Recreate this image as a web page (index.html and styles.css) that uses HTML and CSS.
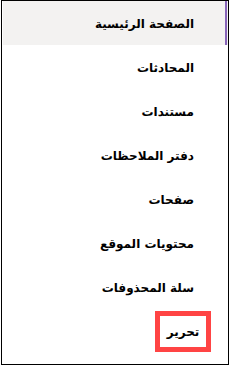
FILE: index.html
```html
<!DOCTYPE html>
<html lang="ar" dir="rtl">

<head>
    <meta charset="UTF-8">
    <meta name="viewport" content="width=device-width, initial-scale=1.0">
    <title>التنقل</title>
    <link rel="stylesheet" href="styles.css">
</head>

<body>
    <nav class="side-nav">
        <ul class="nav-list">
            <li class="nav-item active"><a href="#">الصفحة الرئيسية</a></li>
            <li class="nav-item"><a href="#">المحادثات</a></li>
            <li class="nav-item"><a href="#">مستندات</a></li>
            <li class="nav-item"><a href="#">دفتر الملاحظات</a></li>
            <li class="nav-item"><a href="#">صفحات</a></li>
            <li class="nav-item"><a href="#">محتويات الموقع</a></li>
            <li class="nav-item"><a href="#">سلة المحذوفات</a></li>
            <!-- رابط التحرير مع إطار التمييز -->
            <li class="nav-item edit-item"><a href="#" class="edit-link">تحرير</a></li>
        </ul>
    </nav>
</body>

</html>
```

FILE: styles.css
```css
* {
    margin: 0;
    padding: 0;
    box-sizing: border-box;
}

body {
    font-family: 'DejaVu Sans', Tahoma, sans-serif;
    background: white;
    color: #000;
}

.side-nav {
    width: 228px;
    height: 365px;
    border: 1px solid #000;
    background: white;
}

.nav-list {
    list-style: none;
    padding-left: 1px;
}

.nav-item {
    position: relative;
    height: 44px;
    display: flex;
    align-items: center;
    padding-right: 34px;
    padding-top: 2px;
}

.nav-item a {
    color: #000;
    text-decoration: none;
    font-size: 12px;
    font-weight: 600;
}

.nav-item.active {
    background: #f3f2f1;
}

.nav-item.active::after {
    content: "";
    position: absolute;
    top: 0;
    bottom: 0;
    right: 1px;
    width: 2px;
    background: #8764b8;
}

.edit-item {
    padding-right: 17px;
    padding-top: 0;
}

.edit-link {
    display: flex;
    align-items: center;
    justify-content: center;
    border: 5px solid #ff4444;
    padding-top: 2px;
    width: 56px;
    height: 41px;
}
```
